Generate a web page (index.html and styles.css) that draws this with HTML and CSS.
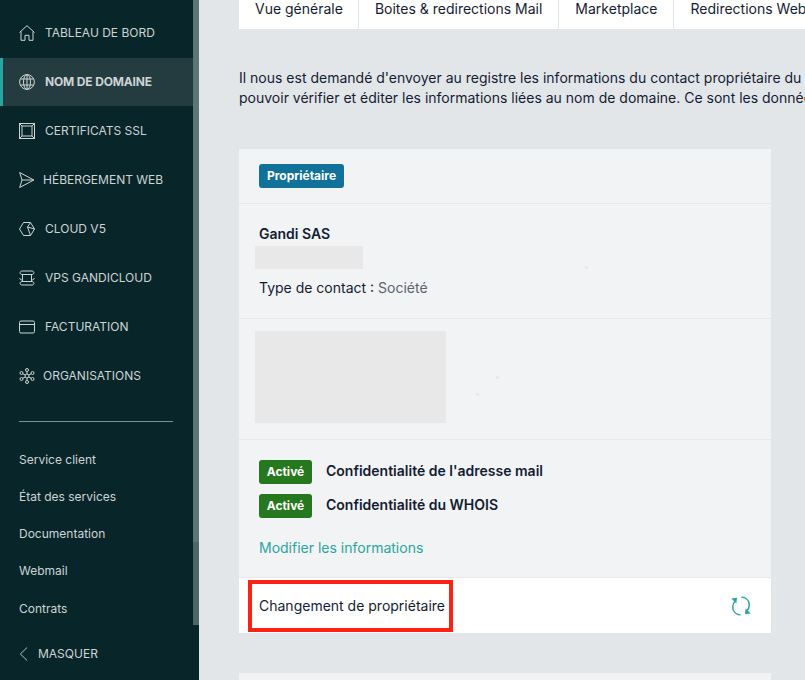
FILE: index.html
```html
<!DOCTYPE html>
<html lang="fr">
<head>
<meta charset="utf-8">
<title>Nom de domaine</title>
<link rel="stylesheet" href="styles.css">
</head>
<body>
<div class="app">
  <aside class="sidebar">
    <div class="side-scroll">
      <div class="side-content">
        <nav class="nav">
          <a class="nav-item"><svg class="ico" viewBox="0 0 16 16"><path d="M.5 7.500 8 .7l7.500 6.800M2 6.500v8.800h4v-5h4v5h4V6.500"/></svg><span>TABLEAU DE BORD</span></a>
          <a class="nav-item active"><svg class="ico" viewBox="0 0 16 16"><circle cx="8" cy="8" r="7.400"/><ellipse cx="8" cy="8" rx="3.500" ry="7.400"/><path d="M1.300 5h13.400M1.300 11h13.400M8 .6v14.800"/></svg><span>NOM DE DOMAINE</span></a>
          <a class="nav-item"><svg class="ico" viewBox="0 0 16 16"><rect x=".5" y=".5" width="15" height="15"/><rect x="3" y="3" width="10" height="10"/><path d="m.5.5 2.500 2.500M15.500.5 13 3M.5 15.500 3 13M15.500 15.500 13 13"/></svg><span>CERTIFICATS SSL</span></a>
          <a class="nav-item tight"><svg class="ico" viewBox="0 0 16 16"><path d="M.7.5 14.800 8 .7 15.500l2.300-7.500zM3 8h11.800"/></svg><span>HÉBERGEMENT WEB</span></a>
          <a class="nav-item"><svg class="ico" viewBox="0 0 16 16"><path d="M4.500 1.500h7L15.500 8l-4 6.500h-7L.5 8zM11.500 1.500 8.500 6 15.500 8M8.500 6 11.500 14.500"/></svg><span>CLOUD V5</span></a>
          <a class="nav-item"><svg class="ico" viewBox="0 0 16 16"><path d="M3 1h10c2.500 0 2.500 3.500 0 3.500H3C.5 4.500.5 1 3 1zM3 11.500h10c2.500 0 2.500 3.500 0 3.500H3c-2.500 0-2.500-3.500 0-3.500zM3.500 4.500v7M12.500 4.500v7M.8 8c0 1.500 1 2 2.700 2M15.200 8c0 1.500-1 2-2.700 2"/></svg><span>VPS GANDICLOUD</span></a>
          <a class="nav-item"><svg class="ico" viewBox="0 0 16 16"><rect x=".5" y="2" width="15" height="12" rx="1.500"/><path d="M.5 5.500h15"/></svg><span>FACTURATION</span></a>
          <a class="nav-item tight"><svg class="ico" viewBox="0 0 16 16"><circle cx="8" cy="8" r="2"/><circle cx="8" cy="2" r="1.500"/><circle cx="8" cy="14" r="1.500"/><circle cx="2.500" cy="5" r="1.500"/><circle cx="13.500" cy="5" r="1.500"/><circle cx="2.500" cy="11" r="1.500"/><circle cx="13.500" cy="11" r="1.500"/><path d="M8 3.500V6M8 10v2.500M3.800 5.800 6.300 7M12.200 5.800 9.700 7M3.800 10.200 6.300 9M12.200 10.200 9.700 9"/></svg><span>ORGANISATIONS</span></a>
        </nav>
        <hr class="side-rule">
        <ul class="side-links">
          <li>Service client</li>
          <li>État des services</li>
          <li>Documentation</li>
          <li>Webmail</li>
          <li>Contrats</li>
        </ul>
      </div>
      <div class="side-track"><div class="side-thumb"></div></div>
    </div>
    <div class="side-foot">
      <svg class="chev" viewBox="0 0 10 16"><path d="M9 .8 1.500 8 9 15.200"/></svg>
      <span>MASQUER</span>
    </div>
  </aside>

  <main class="main">
    <div class="tabs">
      <a class="tab">Vue générale</a>
      <a class="tab">Boites &amp; redirections Mail</a>
      <a class="tab">Marketplace</a>
      <a class="tab">Redirections Web</a>
    </div>
    <p class="intro">Il nous est demandé d'envoyer au registre les informations du contact propriétaire du domaine<br>pouvoir vérifier et éditer les informations liées au nom de domaine. Ce sont les données</p>
    <section class="card">
      <div class="row row-head"><span class="badge badge-blue">Propriétaire</span></div>
      <div class="row row-owner">
        <div class="name">Gandi SAS</div>
        <div class="blur blur-line"></div>
        <div class="type">Type de contact : <span class="muted">Société</span></div>
        <i class="speck speck-a"></i>
      </div>
      <div class="row row-address">
        <div class="blur blur-block"></div>
        <i class="speck speck-b"></i>
        <i class="speck speck-c"></i>
      </div>
      <div class="row row-privacy">
        <div class="privacy"><span class="badge badge-green">Activé</span><strong>Confidentialité de l'adresse mail</strong></div>
        <div class="privacy"><span class="badge badge-green">Activé</span><strong>Confidentialité du WHOIS</strong></div>
        <a class="link">Modifier les informations</a>
      </div>
      <div class="row row-change">
        <span class="change-label">Changement de propriétaire</span>
        <svg class="sync" viewBox="0 0 20 20"><path d="M9.500 19C4.500 18.500 1.700 15 1.700 11c0-2.400.9-4.500 2.600-6M10.500 1C15.500 1.500 18.300 5 18.300 9c0 2.400-.9 4.500-2.600 6"/><path class="fill" d="M.3 2.600 6 1.700 5.400 7.400zM19.700 17.400 14 18.300 14.600 12.600z"/></svg>
        <div class="highlight"></div>
      </div>
    </section>
    <section class="card card-next"></section>
  </main>
</div>
</body>
</html>
```
FILE: styles.css
```css
* { box-sizing: border-box; }
html, body { margin: 0; height: 100%; overflow: hidden; }
body { font-family: Inter, "Liberation Sans", sans-serif; color: #141c33; background: #e3e6e9; }
.app { display: flex; width: 805px; height: 680px; overflow: hidden; }

.sidebar { flex: 0 0 199px; height: 680px; display: flex; flex-direction: column; background: #08262a; }
.side-scroll { flex: 0 0 625px; display: flex; overflow: hidden; }
.side-content { flex: 0 0 193px; padding-top: 8px; }
.side-track { flex: 0 0 6px; background: #5c7673; }
.side-thumb { margin-top: 542px; height: 83px; background: #4d6865; }

.nav-item { display: flex; align-items: center; height: 49px; padding-left: 19px; gap: 10px; color: #cdd4d4; font-size: 12px; font-weight: 400; }
.nav-item.tight { gap: 8px; }
.nav-item.active { height: 48px; margin-top: 1px; padding-bottom: 1px; background: #243c40; border-left: 3px solid #2aa6a2; padding-left: 16px; font-weight: 700; letter-spacing: -.15px; }
.ico { width: 16px; height: 16px; flex: none; fill: none; stroke: #cdd4d4; stroke-width: 1; }

.side-rule { margin: 21px 20px 0 19px; border: 0; height: 1px; background: #7c9291; }
.side-links { list-style: none; margin: 18.850px 0 0; padding: 0 0 0 19px; color: #cdd4d4; font-size: 12px; font-weight: 400; }
.side-links li { height: 37.200px; line-height: 37px; }

.side-foot { flex: 1; display: flex; align-items: center; gap: 10px; padding: 2px 0 0 19px; color: #cdd4d4; font-size: 12px; font-weight: 400; }
.chev { width: 9px; height: 16px; fill: none; stroke: #cdd4d4; stroke-width: 1; }

.main { flex: 1; min-width: 0; padding-left: 40px; overflow: hidden; }
.tabs { display: flex; height: 29px; background: #fff; white-space: nowrap; width: 600px; }
.tab { flex: none; padding: 0 16px; font-size: 14px; line-height: 17px; color: #141c33; border-right: 1px solid #e3e6e9; }
.tab:first-child { padding-right: 15px; }
.tab:last-child { border-right: 0; }

.intro { margin: 39px 0 0; font-size: 14px; line-height: 20px; white-space: nowrap; color: #141c33; }

.card { width: 532px; margin-top: 41px; background: #f1f3f5; }
.card-next { margin-top: 40px; height: 60px; }
.row { position: relative; padding: 0 20px; border-bottom: 1px solid #e6e8ea; }
.row-head { height: 55px; padding-top: 15px; }
.badge { display: inline-block; height: 24px; line-height: 24px; border-radius: 3px; padding: 0 8px; color: #fff; font-size: 12px; font-weight: 700; }
.badge-blue { background: #10719b; }
.badge-green { background: #26781e; flex: none; width: 53px; padding: 0; text-align: center; }

.row-owner { height: 115px; padding-top: 20px; }
.name { font-size: 14px; line-height: 20px; font-weight: 600; }
.blur { background: #e8e8e8; margin-left: -4px; filter: blur(.6px); }
.blur-line { width: 108px; height: 23px; margin-top: 2px; }
.type { margin-top: 9px; font-size: 14px; line-height: 20px; }
.muted { color: #5c6370; }
.row-address { height: 121px; padding-top: 12px; }
.blur-block { width: 191px; height: 92px; }
.speck { position: absolute; width: 3px; height: 3px; border-radius: 50%; background: #e6e6e6; }
.speck-a { left: 346px; top: 62px; }
.speck-b { left: 257px; top: 57px; }
.speck-c { left: 237px; top: 74px; }

.row-privacy { height: 138px; padding-top: 20px; }
.privacy { display: flex; align-items: center; gap: 14px; height: 24px; margin-bottom: 10px; font-size: 14px; }
.privacy strong { font-weight: 600; margin-bottom: 3px; }
.link { display: block; margin-top: 20px; font-size: 14px; line-height: 20px; color: #2aa6a2; }

.row-change { height: 55px; display: flex; align-items: center; justify-content: space-between; background: #fff; border-bottom: 0; font-size: 14px; }
.sync { width: 20px; height: 20px; fill: none; stroke: #2aa6a2; stroke-width: 1.500; }
.sync .fill { fill: #2aa6a2; stroke: none; }
.highlight { position: absolute; left: 9px; top: 2px; width: 205px; height: 52px; border: 4px solid #ff2016; }
```
